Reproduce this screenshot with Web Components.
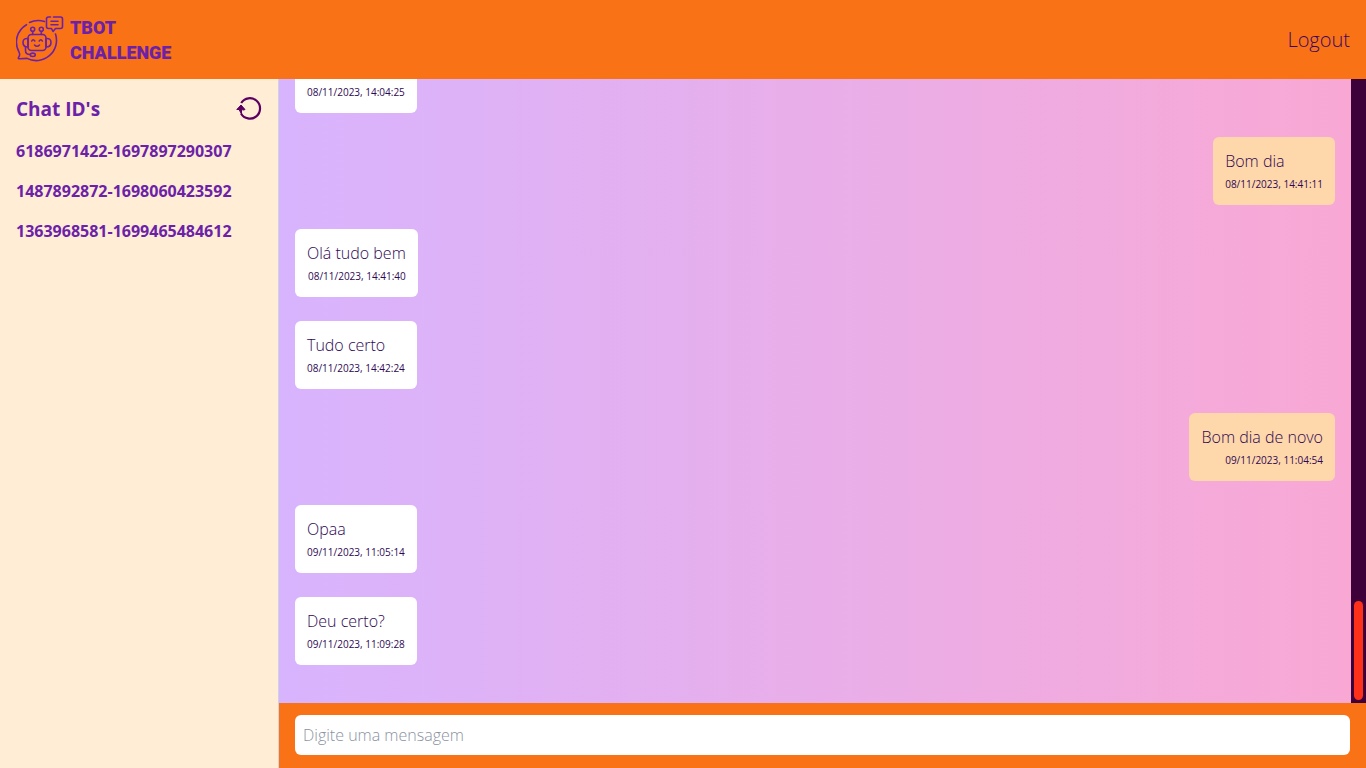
<!DOCTYPE html>
<html lang="pt-BR">
<head>
<meta charset="utf-8">
<meta name="viewport" content="width=device-width, initial-scale=1">
<title>TBot Challenge</title>
<style>
  body { margin: 0; font-family: "Open Sans", "Noto Sans", sans-serif; font-size: 16px; line-height: 24px; color: #2e0854; }
</style>
</head>
<body>
<chat-app></chat-app>

<script>
const define = (name, html, setup) => customElements.define(name, class extends HTMLElement {
  constructor() {
    super();
    const t = document.createElement('template');
    t.innerHTML = html;
    this.attachShadow({ mode: 'open' }).append(t.content.cloneNode(true));
  }
  connectedCallback() { if (setup) setup(this); }
});

define('brand-logo', `
<style>
  :host { display: flex; align-items: center; gap: 6px; color: #6b21a8; }
  svg { display: block; flex: none; }
  span { display: block; font: 900 18px/25px Roboto, "Liberation Sans", sans-serif; text-transform: uppercase; }
</style>
<svg width="48" height="48" viewBox="0 0 48 48" fill="none" stroke="currentColor" stroke-width="1.6" stroke-linecap="round" stroke-linejoin="round" aria-hidden="true">
  <path d="M10.500 8.700A20.200 20.200 0 0 0 3 36Q4.500 39 2.500 41.500Q1.800 43 4 42.700L11 42.400A20.300 20.300 0 0 0 39.500 18"/>
  <path d="M28.500 5.500A20 20 0 0 0 13.500 6.500"/>
  <path d="M34.500 1H32.500Q30.500 1 30.500 3V10.500Q30.500 12.500 32.500 12.500H35.500L37 15.500L39.500 12.500H44.500Q46.500 12.500 46.500 10.500V3Q46.500 1 44.500 1H37.500"/>
  <path d="M35 5.200H42M35 8.800H42"/>
  <rect x="12" y="18.500" width="18" height="16" rx="3.500"/>
  <path d="M16.700 15.500V18.500M25.300 15.500V18.500"/>
  <circle cx="16.700" cy="13.300" r="2"/><circle cx="25.300" cy="13.300" r="2"/>
  <path d="M12 22.500Q7 22 7 26.500T12 31ZM30 22.500Q35 22 35 26.500T30 31Z"/>
  <path d="M15.800 25Q17 22.500 18.800 25M23.200 25Q25 22.500 26.300 25M18.500 29Q21 31.500 23.500 29"/>
  <path d="M9.500 31V34.500Q9.500 38.500 14 38.500"/><ellipse cx="16.800" cy="38.800" rx="2.500" ry="1.700"/>
</svg>
<span>TBot<br>Challenge</span>`);

define('app-header', `
<style>
  :host { display: flex; align-items: center; justify-content: space-between; height: 79px; padding: 0 16px; background: #f97316; }
  a { color: #3b0764; font-size: 20px; line-height: 28px; font-weight: 300; text-decoration: none; }
</style>
<brand-logo></brand-logo>
<a href="#logout">Logout</a>`);

define('chat-sidebar', `
<style>
  :host { display: block; padding: 16px; background: #ffedd5; border-right: 1px solid #cbd5e1; color: #6b21a8; font-weight: 700; }
  header { display: flex; justify-content: space-between; align-items: center; height: 28px; margin-bottom: 16px; }
  h2 { margin: 0; font-size: 19px; line-height: 28px; }
  button { border: 0; padding: 0; background: none; color: #5b0060; width: 26px; height: 26px; }
  svg { display: block; }
  nav { display: grid; gap: 16px; }
</style>
<header>
  <h2>Chat ID's</h2>
  <button type="button" aria-label="Atualizar"><svg width="26" height="26" viewBox="0 0 26 26" fill="none" stroke="currentColor" stroke-width="2.2"><path d="M5.200 7A10.200 10.200 0 1 1 5 17.500"/><path d="M0.800 13.500L5 9L9 13.500L7.500 14L5.500 13.500V18L3 13.500Z" fill="currentColor" stroke-width="1"/></svg></button>
</header>
<nav><slot></slot></nav>`);

define('chat-link', `
<style>
  :host { display: block; }
  a { display: block; color: inherit; text-decoration: none; }
</style>
<a href="#chat"><slot></slot></a>`);

define('chat-message', `
<style>
  :host { display: block; flex: none; align-self: flex-start; padding: 12px; border-radius: 6px; background: #fff; text-align: right; font-weight: 300; }
  :host([sent]) { align-self: flex-end; background: #fed7aa; }
  p { margin: 0; text-align: left; }
  time { display: block; margin-top: 2px; font-size: 10px; line-height: 18px; font-weight: 400; }
</style>
<p><slot></slot></p><time></time>`, el => { el.shadowRoot.querySelector('time').textContent = el.getAttribute('time'); });

define('message-list', `
<style>
  :host { display: flex; min-height: 0; overflow: hidden; background: #3d0038; }
  .messages { flex: 1; display: flex; flex-direction: column; justify-content: flex-end; gap: 24px; padding: 0 16px 38px; background: linear-gradient(to right, #d8b4fe, #f9a8d4); }
  .track { flex: none; width: 15px; box-sizing: border-box; padding: 3px; display: flex; align-items: flex-end; }
  .thumb { width: 9px; height: 16%; border-radius: 5px; background: #ff3019; }
</style>
<div class="messages"><slot></slot></div>
<div class="track"><div class="thumb"></div></div>`);

define('message-form', `
<style>
  :host { display: block; padding: 12px 16px 13px; background: #f97316; }
  form { display: flex; }
  input { flex: 1; min-width: 0; height: 40px; box-sizing: border-box; border: 0; border-radius: 6px; padding: 8px; background: #fff; font: inherit; font-weight: 300; color: #3b0764; }
  input::placeholder { color: #8b929f; opacity: 1; }
</style>
<form><input type="text" aria-label="Mensagem" placeholder="Digite uma mensagem"></form>`);

define('chat-app', `
<style>
  :host { display: grid; grid-template: auto minmax(0, 1fr) auto / 279px minmax(0, 1fr); height: 100vh; }
  app-header { grid-column: 1 / -1; }
  chat-sidebar { grid-row: 2 / 4; }
</style>
<app-header></app-header>
<chat-sidebar>
  <chat-link>6186971422-1697897290307</chat-link>
  <chat-link>1487892872-1698060423592</chat-link>
  <chat-link>1363968581-1699465484612</chat-link>
</chat-sidebar>
<message-list>
  <chat-message time="08/11/2023, 14:04:25"></chat-message>
  <chat-message sent time="08/11/2023, 14:41:11">Bom dia</chat-message>
  <chat-message time="08/11/2023, 14:41:40">Olá tudo bem</chat-message>
  <chat-message time="08/11/2023, 14:42:24">Tudo certo</chat-message>
  <chat-message sent time="09/11/2023, 11:04:54">Bom dia de novo</chat-message>
  <chat-message time="09/11/2023, 11:05:14">Opaa</chat-message>
  <chat-message time="09/11/2023, 11:09:28">Deu certo?</chat-message>
</message-list>
<message-form></message-form>`);
</script>
</body>
</html>
